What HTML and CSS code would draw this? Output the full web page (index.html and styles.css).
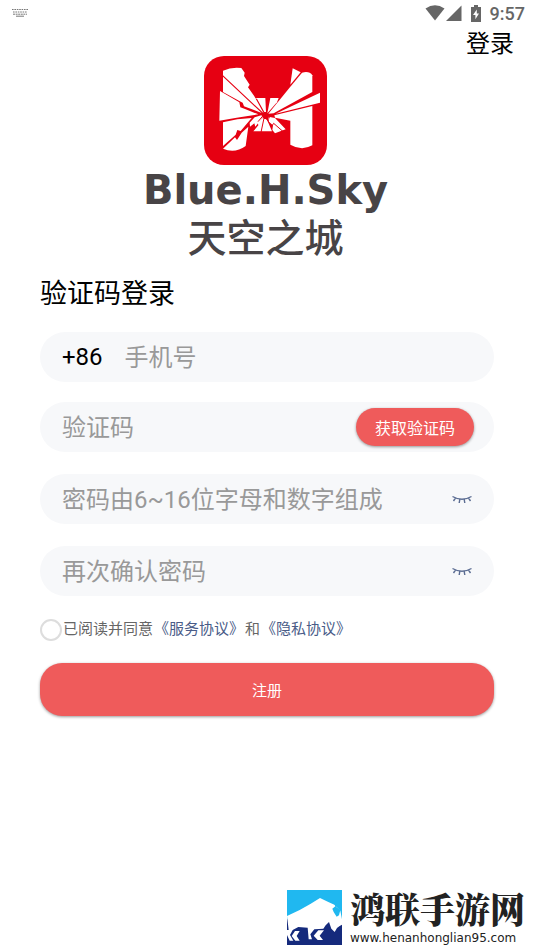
FILE: index.html
```html
<!DOCTYPE html>
<html lang="zh-CN">
  <head>
    <meta charset="UTF-8" />
    <meta name="viewport" content="width=device-width, initial-scale=1.0" />
    <title>验证码登录</title>
    <link rel="stylesheet" href="styles.css">
  </head>
  <body>
    <header class="status-bar">
      <svg class="keyboard-icon" width="16" height="10" viewBox="0 0 16 10" fill="none" stroke="#777">
        <path d="M0 1.5h16M1 4h14" stroke-dasharray="1.6 0.8" />
        <path d="M1 6.2h14" stroke-dasharray="2 0.6" />
        <path d="M4 8.2h8" />
      </svg>
      <div class="status-right">
        <svg width="20" height="16" viewBox="0 0 20 16"><path d="M0.5 3.5Q10 -3 19.5 3.5L10 15.5z" fill="#666" /></svg>
        <svg width="16" height="16" viewBox="0 0 16 16"><path d="M15.5 0.5V16H0z" fill="#666" /></svg>
        <svg class="battery-icon" width="10" height="17" viewBox="0 0 10 17">
          <path d="M3 0h4v2h3v15H0V2h3z" fill="#666" />
          <path d="M5.8 4.5L2 10h2.4v4.2L8 8.5H5.8z" fill="#fff" />
        </svg>
        <span class="time">9:57</span>
      </div>
    </header>

    <nav class="top-nav"><a href="#login">登录</a></nav>

    <main>
      <div class="brand">
        <svg width="123" height="109" viewBox="27 18 369 327">
          <rect x="27" y="18" width="369" height="327" rx="60" fill="#e60012" />
          <g fill="#fff">
            <path d="M84 62Q110 50 139 54L149 68L147 78L164 104L159 112L178 139L206 190L84 76z" />
            <path d="M84 80L200 189L147 169L143 158L133 153L84 126z" />
            <path d="M75 123L133 157L136 172L150 177L190 193L125 203L73 212z" />
            <path d="M84 217L127 208L170 204L137 243L127 240L122 254L84 288z" />
            <path d="M84 296L120 262L126 270L140 248L160 230L152 288Q119 312 84 296z" />
            <path d="M174 144H211L213 186L208 186L186 146z" />
            <path d="M226 144H251L246 157L217 190z" />
            <path d="M293 55L317 67L286 104z" />
            <path d="M286 110L321 68Q343 62 352 76V126L236 190L220 191z" />
            <path d="M375 128V158L242 191z" />
            <path d="M238 196L352 168V286Q320 304 286 284V212L240 203z" />
            <path d="M220 200L240 204L272 238L240 250L232 240L234 226L222 216z" />
            <path d="M204 203L216 209L231 244H175L190 226L188 217z" />
            <path d="M164 218L179 202L199 196L204 201L181 230L178 220L165 230z" />
          </g>
          <g fill="none" stroke="#e60012" stroke-width="3">
            <path d="M189 215L210 190L198 247M215 207L230 229L236 220L268 248" />
            <path d="M203 195h6v10h5v-9h8v9" stroke-width="4" />
          </g>
        </svg>
        <div class="brand-name">Blue.H.Sky</div>
        <div class="brand-cn">天空之城</div>
      </div>

      <form class="register" action="">
        <h1>验证码登录</h1>

        <div class="field field-phone">
          <label for="phone">+86</label>
          <input type="tel" id="phone" name="phone" placeholder="手机号" />
        </div>

        <div class="field">
          <input type="text" id="code" name="code" placeholder="验证码" aria-label="验证码" />
          <button type="button" class="btn-code">获取验证码</button>
        </div>

        <div class="field">
          <input type="password" id="pwd" name="pwd" placeholder="密码由6~16位字母和数字组成" aria-label="密码" />
          <button type="button" class="btn-eye" aria-label="显示密码">
            <svg width="20" height="10" viewBox="0 0 20 10" fill="none" stroke="#5b6c92" stroke-width="1.4">
              <path d="M0.5 2.5Q10 8 19.5 2.5M3.5 4L1.5 7M7.8 5.3L7.2 9M12.2 5.3L12.8 9M16.5 4L18.5 7" />
            </svg>
          </button>
        </div>

        <div class="field">
          <input type="password" id="cpwd" name="cpwd" placeholder="再次确认密码" aria-label="再次确认密码" />
          <button type="button" class="btn-eye" aria-label="显示密码">
            <svg width="20" height="10" viewBox="0 0 20 10" fill="none" stroke="#5b6c92" stroke-width="1.4">
              <path d="M0.5 2.5Q10 8 19.5 2.5M3.5 4L1.5 7M7.8 5.3L7.2 9M12.2 5.3L12.8 9M16.5 4L18.5 7" />
            </svg>
          </button>
        </div>

        <div class="agree">
          <input type="checkbox" id="agree" name="agree" />
          <label for="agree">已阅读并同意</label>
          <a href="#terms">《服务协议》</a>
          <span>和</span>
          <a href="#privacy">《隐私协议》</a>
        </div>

        <button type="submit" class="btn-submit">注册</button>
      </form>
    </main>

    <footer class="site-mark">
      <svg width="55" height="55" viewBox="0 0 165 165">
        <path d="M0 0H165V165H0z" fill="#152a7c" />
        <path d="M0 0H165V88H0z" fill="#20b8f0" />
        <path d="M0 78L38 60L70 42L99 24L124 36L142 44L160 62L165 88V104L158 108L150 114L143 126L133 116L126 96L116 106L109 116L82 118L70 133L75 148H65L62 113L34 111L17 120L9 135L19 152H8L0 135V120H5z" fill="#fff" />
        <path d="M140 32Q152 38 148 51L160 60L156 76L149 80L140 66L136 56L145 49z" fill="#20b8f0" />
        <path d="M25 152L14 138L24 123H38L29 138L38 152zM92 150L80 137L94 121H111L98 137L108 150z" fill="#fff" />
      </svg>
      <div class="site-text">
        <strong>鸿联手游网</strong>
        <span>www.henanhonglian95.com</span>
      </div>
    </footer>
  </body>
</html>
```
FILE: styles.css
```css
* {
  box-sizing: border-box;
}

body {
  display: flex;
  flex-direction: column;
  min-height: 100vh;
  margin: 0;
  background-color: white;
  color: black;
  font-family: Roboto, "Noto Sans CJK SC", sans-serif;
}

a {
  text-decoration: none;
}

button {
  border: none;
  font-family: inherit;
  cursor: pointer;
}

.status-bar {
  display: flex;
  justify-content: space-between;
  align-items: center;
  height: 28px;
  padding: 0 9px 2px 12px;
}

.status-right {
  display: flex;
  align-items: center;
  gap: 1px;
}

.battery-icon {
  margin: 0 8px;
}

.time {
  color: #666;
  font-size: 18px;
  font-weight: 500;
}

.top-nav {
  padding: 0 20px;
  text-align: right;
  font-size: 24px;
  line-height: 32px;
}

.top-nav a {
  color: black;
}

.brand {
  display: flex;
  flex-direction: column;
  align-items: center;
  margin-top: -4px;
  padding-right: 3px;
  color: #484446;
}

.brand-name {
  font-family: "DejaVu Sans", sans-serif;
  font-size: 40px;
  font-weight: 600;
  line-height: 50px;
}

.brand-cn {
  font-size: 39px;
  font-weight: 500;
  line-height: 48px;
}

.register {
  display: flex;
  flex-direction: column;
  gap: 22px;
  padding: 0 40px;
}

h1 {
  margin: 16px 0 0;
  font-size: 27px;
  font-weight: 400;
  line-height: 31px;
}

.field {
  display: flex;
  align-items: center;
  height: 50px;
  padding: 0 20px 0 22px;
  border-radius: 25px;
  background-color: #f7f8fa;
  font-size: 24px;
}

.field-phone {
  gap: 22px;
  margin-bottom: -2px;
}

.field input {
  flex: 1;
  min-width: 0;
  padding: 2px 0 0;
  border: none;
  outline: none;
  background: none;
  color: black;
  font-family: inherit;
  font-size: 24px;
}

.field input::placeholder {
  color: #999;
}

.btn-code {
  height: 38px;
  padding: 0 19px;
  border-radius: 19px;
  background-color: #ef5b5b;
  box-shadow: 0 1px 3px rgba(0, 0, 0, 0.4);
  color: white;
  font-size: 16px;
}

.btn-eye {
  display: flex;
  padding: 2px;
  background: none;
}

.agree {
  display: flex;
  align-items: center;
  gap: 1px;
  color: #666;
  font-size: 15px;
  line-height: 23px;
}

.agree input {
  appearance: none;
  width: 22px;
  height: 22px;
  margin: 0;
  border: 2px solid #ddd;
  border-radius: 50%;
}

.agree input:checked {
  background-color: #ef5b5b;
}

.agree a {
  color: #4a5c88;
}

.btn-submit {
  height: 53px;
  border-radius: 22px;
  background-color: #ef5b5b;
  box-shadow: 0 1px 3px rgba(0, 0, 0, 0.4);
  color: white;
  font-size: 15px;
}

.site-mark {
  display: flex;
  justify-content: flex-end;
  gap: 8px;
  margin-top: auto;
  padding: 0 9px 3px;
}

.site-text {
  display: flex;
  flex-direction: column;
  gap: 3px;
  color: #222;
}

.site-text strong {
  font-family: "Noto Serif CJK SC", "Noto Sans CJK SC", serif;
  font-size: 35px;
  font-weight: 900;
  line-height: 37px;
}

.site-text span {
  font-family: "DejaVu Sans", sans-serif;
  font-size: 12px;
  line-height: 17px;
}
```
